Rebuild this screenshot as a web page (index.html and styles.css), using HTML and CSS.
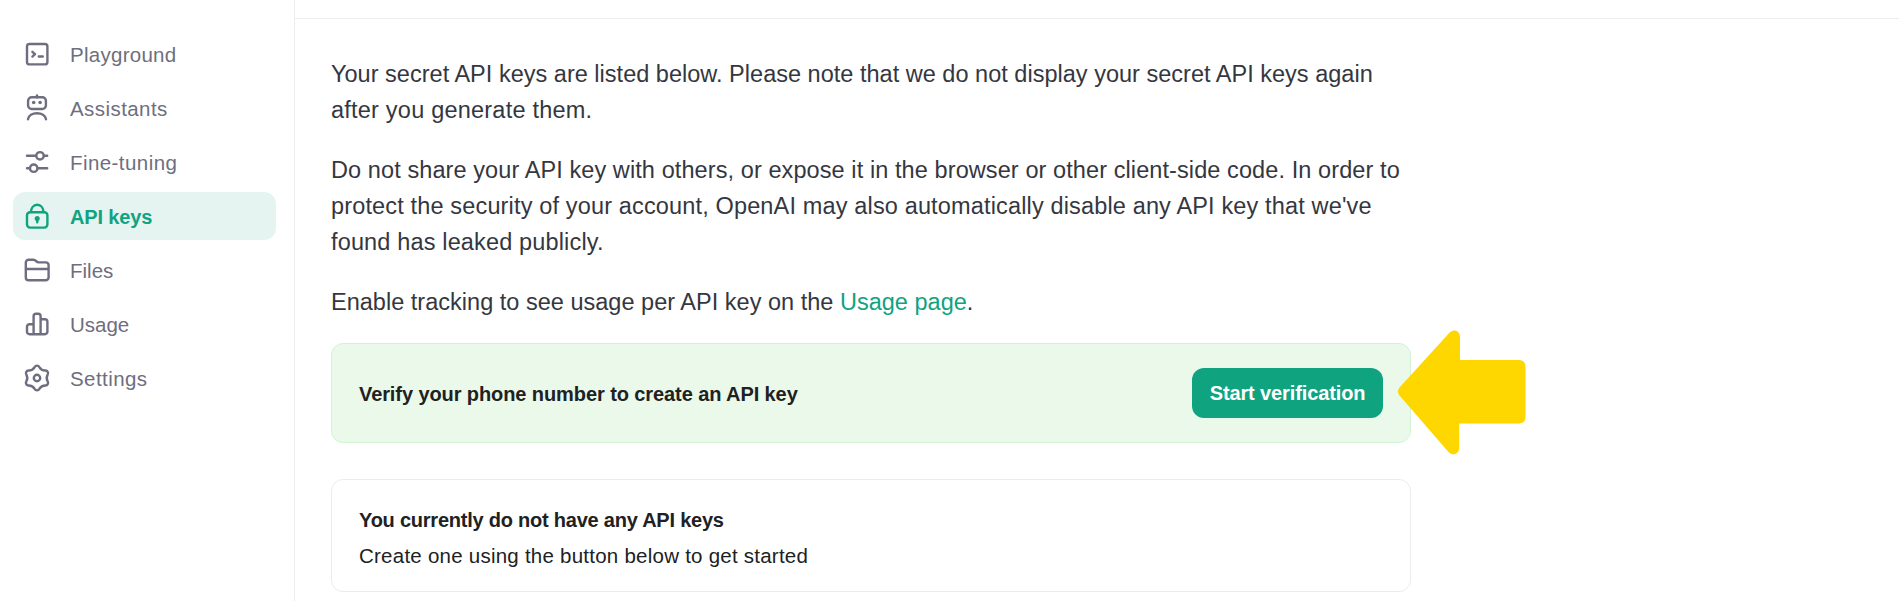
FILE: index.html
```
<!DOCTYPE html>
<html lang="en">
<head>
<meta charset="utf-8">
<title>API keys</title>
<link rel="stylesheet" href="styles.css">
</head>
<body>
<div class="app">
  <nav class="sidebar">
    <a class="nav-item">
      <svg class="icon" viewBox="0 0 30 30"><rect x="5" y="5" width="20.4" height="20.4" rx="2.5"/><path d="M10.400 12.800l2.600 2.400-2.600 2.400M16.800 17.500h4"/></svg>
      <span class="track-3">Playground</span>
    </a>
    <a class="nav-item">
      <svg class="icon" viewBox="0 0 30 30"><path d="M15 2.400v1.800"/><rect x="6.100" y="4.200" width="17.800" height="11.800" rx="3.600"/><path d="M6 26.200c.6-3.800 4.400-6 9-6s8.400 2.200 9 6"/><circle class="solid" cx="11.700" cy="9.500" r="1.800"/><circle class="solid" cx="18.100" cy="9.500" r="1.800"/></svg>
      <span class="track-4">Assistants</span>
    </a>
    <a class="nav-item">
      <svg class="icon" viewBox="0 0 30 30"><path d="M5 8.800h9M22 8.800h3.200M5 21.200h2.700M15.700 21.200h9.500"/><circle cx="18" cy="8.800" r="3.700"/><circle cx="11.700" cy="21.200" r="3.700"/></svg>
      <span class="track-4">Fine-tuning</span>
    </a>
    <a class="nav-item active">
      <svg class="icon" viewBox="0 0 30 30"><rect x="5" y="11.200" width="20.400" height="15.400" rx="3"/><path d="M9 11c0-4 2.400-7.200 6.200-7.200s6.200 3.200 6.200 7.200M15.200 18.500v2.800"/><circle class="solid" cx="15.200" cy="17.600" r="2.500"/></svg>
      <span class="track-tight">API keys</span>
    </a>
    <a class="nav-item">
      <svg class="icon" viewBox="0 0 30 30"><path d="M3.800 7.500a2.800 2.800 0 0 1 2.800-2.800h4.700c1.200 0 1.900.4 2.600 1.200s1.500 1.500 2.800 1.500h7.100a2.800 2.800 0 0 1 2.800 2.800v12.200a2.800 2.800 0 0 1-2.800 2.800H6.600a2.800 2.800 0 0 1-2.800-2.800zM3.800 14h22.800"/></svg>
      <span>Files</span>
    </a>
    <a class="nav-item">
      <svg class="icon" viewBox="0 0 30 30"><path d="M11.600 25.200V7.300a2.500 2.500 0 0 1 2.500-2.500h2a2.500 2.500 0 0 1 2.500 2.500v17.900M11.600 15.200H7.500A2.500 2.500 0 0 0 5 17.700v5a2.500 2.500 0 0 0 2.500 2.500h15.400a2.500 2.500 0 0 0 2.500-2.500v-10a2.500 2.500 0 0 0-2.500-2.500h-4.300"/></svg>
      <span>Usage</span>
    </a>
    <a class="nav-item">
      <svg class="icon" viewBox="0 0 30 30"><path d="M12.670 4.040A2.600 2.600 0 0 1 17.330 4.040Q19.350 7.470 23.320 7.510A2.600 2.600 0 0 1 25.650 11.540Q23.700 15 25.650 18.460A2.600 2.600 0 0 1 23.320 22.490Q19.350 22.530 17.330 25.960A2.600 2.600 0 0 1 12.670 25.960Q10.650 22.530 6.680 22.490A2.600 2.600 0 0 1 4.350 18.460Q6.300 15 4.350 11.540A2.600 2.600 0 0 1 6.680 7.510Q10.650 7.470 12.670 4.040z"/><circle cx="15" cy="15" r="3.200"/></svg>
      <span class="track-4">Settings</span>
    </a>
  </nav>
  <main class="content">
    <section class="page">
      <p><span class="p1a">Your secret API keys are listed below. Please note that we do not display your secret API keys again</span><br><span class="p1b">after you generate them.</span></p>
      <p><span class="p2a">Do not share your API key with others, or expose it in the browser or other client-side code. In order to</span><br><span class="p2b">protect the security of your account, OpenAI may also automatically disable any API key that we've</span><br><span class="p2b">found has leaked publicly.</span></p>
      <p><span class="p1a">Enable tracking to see usage per API key on the <a class="link">Usage page</a>.</span></p>
      <div class="card verify">
        <strong class="verify-text">Verify your phone number to create an API key</strong>
        <button class="button">Start verification</button>
        <svg class="arrow" viewBox="0 0 128 126"><path d="M1.500 57.500L51 3.200C55.500-1.800 62 .5 62 7v23h59.500a6 6 0 0 1 6 6v51.500a6 6 0 0 1-6 6H61.200v24.500c0 6-6.500 8.500-10.700 4L1.500 65.500Q-1.500 61.500 1.500 57.500z"/></svg>
      </div>
      <div class="card empty">
        <strong class="empty-title">You currently do not have any API keys</strong>
        <span class="empty-text">Create one using the button below to get started</span>
      </div>
    </section>
  </main>
</div>
</body>
</html>
```
FILE: styles.css
```
* { box-sizing: border-box; }
body {
  margin: 0;
  background: #fff;
  font-family: "Liberation Sans", Arial, sans-serif;
  color: #353740;
}
.app { display: flex; height: 601px; overflow: hidden; }
.sidebar {
  flex: none;
  display: flex;
  flex-direction: column;
  gap: 6px;
  width: 295px;
  padding: 30px 18px 0 13px;
  border-right: 1px solid #ececf1;
}
.nav-item {
  flex: none;
  display: flex;
  align-items: center;
  gap: 18px;
  height: 48px;
  padding: 0 9px;
  border-radius: 12px;
  font-size: 20.5px;
  line-height: 24px;
  color: #6e6e80;
}
.nav-item span { padding-top: 1px; }
.active {
  background: #e5f3f1;
  color: #10a37f;
  font-size: 20px;
  font-weight: bold;
}
.icon {
  flex: none;
  width: 30px;
  height: 30px;
  fill: none;
  stroke: currentColor;
  stroke-width: 2.4;
  stroke-linecap: round;
  stroke-linejoin: round;
}
.icon .solid { fill: currentColor; stroke: none; }
.track-3 { letter-spacing: .27px; }
.track-4 { letter-spacing: .43px; }
.track-tight { letter-spacing: -.15px; }

.content { flex: 1; padding-top: 18px; }
.page { border-top: 1px solid #ececec; padding: 37px 0 0 36px; }
p {
  margin: 0 0 24px;
  font-size: 23.5px;
  line-height: 36px;
  white-space: nowrap;
}
.p1a { letter-spacing: .015px; }
.p1b { letter-spacing: .22px; }
.p2a { letter-spacing: .09px; }
.p2b { letter-spacing: .15px; }
.link { color: #10a37f; }
.card {
  width: 1080px;
  border: 1px solid #ececec;
  border-radius: 12px;
  color: #202123;
  font-size: 20px;
}
.verify {
  position: relative;
  display: flex;
  align-items: center;
  justify-content: space-between;
  height: 100px;
  margin-top: -1px;
  padding: 0 27px;
  background: #ebf9eb;
  border-color: #d2f4d3;
}
.verify-text { letter-spacing: -.09px; padding-top: 2px; }
.button {
  width: 191px;
  height: 50px;
  padding: 0;
  border: 0;
  border-radius: 12px;
  background: #10a37f;
  color: #fff;
  font: bold 20px "Liberation Sans", Arial, sans-serif;
  letter-spacing: -.12px;
}
.arrow {
  position: absolute;
  left: 1066px;
  top: -14px;
  width: 128px;
  height: 126px;
  fill: #ffd700;
}
.empty {
  display: flex;
  flex-direction: column;
  height: 113px;
  margin-top: 36px;
  padding: 22px 27px;
  line-height: 36px;
}
.empty-title { letter-spacing: -.23px; }
.empty-text { font-size: 20.5px; letter-spacing: .24px; }
```
